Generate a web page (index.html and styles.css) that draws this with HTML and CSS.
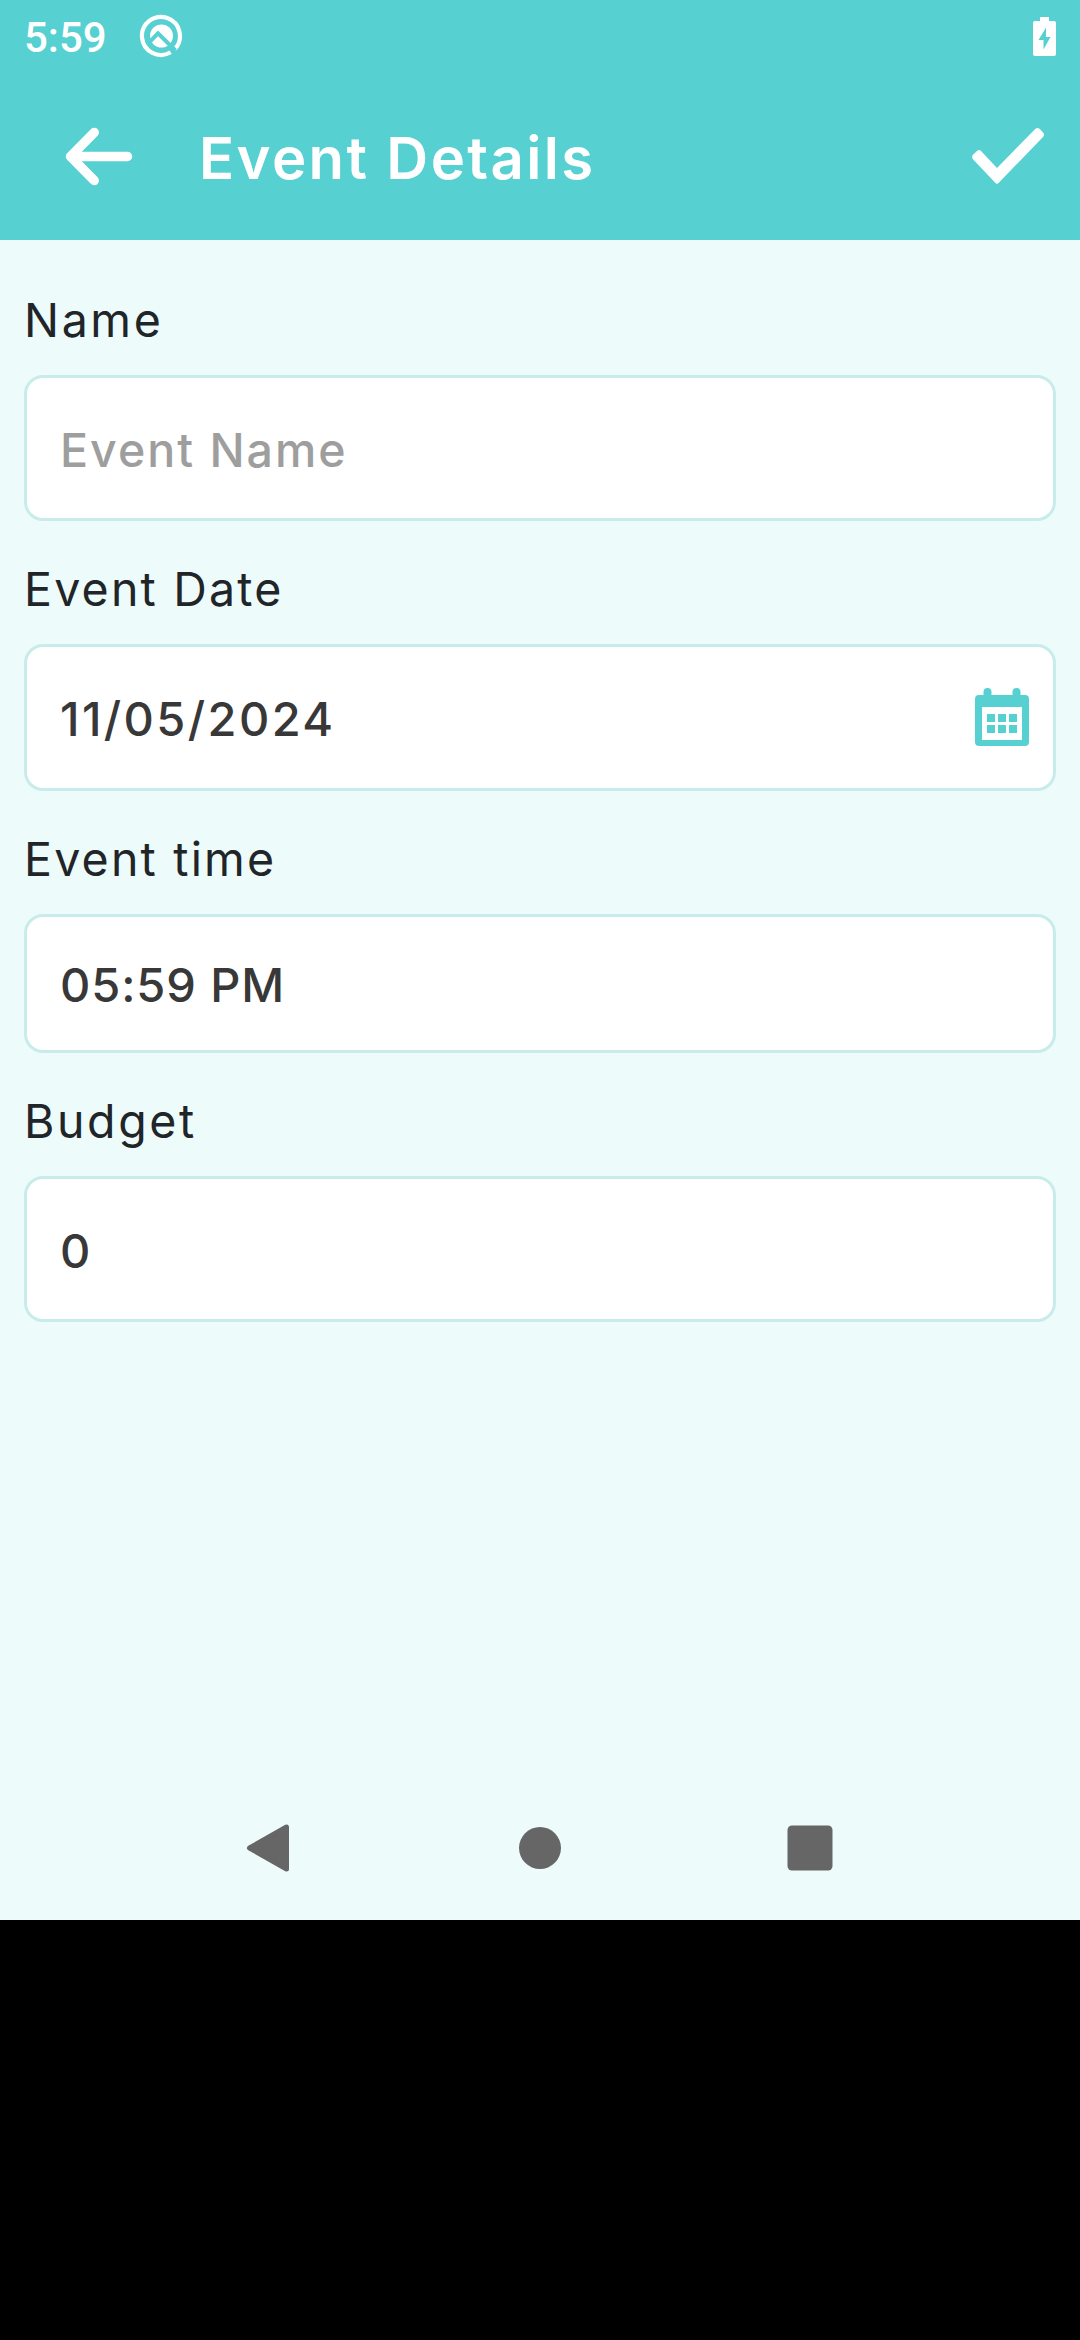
FILE: index.html
```html
<!DOCTYPE html>
<html lang="en">
<head>
<meta charset="utf-8">
<title>Event Details</title>
<link rel="stylesheet" href="styles.css">
</head>
<body>
<div class="screen">
  <div class="status-bar">
    <span class="clock">5:59</span>
    <svg class="app-icon" width="44" height="44" viewBox="0 0 44 44">
      <path d="M34.5 36.200A19 19 0 1 0 30.500 38.900" transform="rotate(-4 22 22)" fill="none" stroke="#fff" stroke-width="4.200"/>
      <circle cx="22.500" cy="22" r="11.500" fill="#fff"/>
      <path d="M11.500 27L19 19.300L36.500 36.500" fill="none" stroke="#56d0d1" stroke-width="4"/>
    </svg>
    <svg class="battery" width="23" height="39" viewBox="0 0 23 39">
      <path fill="#fff" fill-rule="evenodd" d="M7 0h9v4h5a2 2 0 0 1 2 2v31a2 2 0 0 1-2 2H2a2 2 0 0 1-2-2V6a2 2 0 0 1 2-2h5zM13 10.500L5.500 23H10.500V32.500L17.500 20H13z"/>
    </svg>
  </div>
  <header class="app-bar">
    <svg class="back" width="68" height="60" viewBox="0 0 68 60">
      <path d="M62.500 30.500H5.500M29.200 6.500L5.500 30.500L29.200 54.500" fill="none" stroke="#fff" stroke-width="9.500" stroke-linecap="round" stroke-linejoin="round"/>
    </svg>
    <h1 class="title">Event Details</h1>
    <svg class="done" width="72" height="56" viewBox="0 0 72 56">
      <path d="M1.200 26.500L5 23Q7 21.200 9 23L25 40L63 1.200Q65.500-1 68 1.200L71 4.500Q73 6.500 71 9L27 54.500Q25 57 23 54.500L1.200 31.500Q-1 29 1.200 26.500Z" fill="#fff"/>
    </svg>
  </header>
  <main class="form">
    <section class="field">
      <div class="label">Name</div>
      <div class="box"><span class="value placeholder">Event Name</span></div>
    </section>
    <section class="field">
      <div class="label wide">Event Date</div>
      <div class="box tall">
        <span class="value date">11/05/2024</span>
        <svg class="calendar" width="54" height="58" viewBox="0 0 54 58">
          <path fill="#56d0d1" fill-rule="evenodd" d="M4 7H8.500V4a4 4 0 0 1 8 0V7H37.500V4a4 4 0 0 1 8 0V7H50a4 4 0 0 1 4 4V54a4 4 0 0 1-4 4H4a4 4 0 0 1-4-4V11a4 4 0 0 1 4-4zM7 19V52H47V19z"/>
          <path fill="#56d0d1" d="M12 26h8v8h-8zM23 26h8v8h-8zM34 26h8v8h-8zM12 37h8v8h-8zM23 37h8v8h-8zM34 37h8v8h-8z"/>
        </svg>
      </div>
    </section>
    <section class="field">
      <div class="label wide">Event time</div>
      <div class="box short"><span class="value time">05:59 PM</span></div>
    </section>
    <section class="field">
      <div class="label">Budget</div>
      <div class="box"><span class="value">0</span></div>
    </section>
  </main>
  <nav class="nav-bar">
    <svg width="48" height="50" viewBox="0 0 48 50"><path d="M4.500 25L41.500 4V46Z" transform="translate(1 0)" fill="#666" stroke="#666" stroke-width="5" stroke-linejoin="round"/></svg>
    <svg width="42" height="42" viewBox="0 0 42 42"><circle cx="21" cy="21" r="21" fill="#666"/></svg>
    <svg width="46" height="46" viewBox="0 0 46 46"><rect x="0.500" y="0.500" width="45" height="45" rx="4.500" fill="#666"/></svg>
  </nav>
</div>
</body>
</html>
```
FILE: styles.css
```css
* { box-sizing: border-box; }
body {
  margin: 0;
  background: #000;
  font-family: Inter, "Liberation Sans", sans-serif;
}
svg { display: block; flex: none; }
.screen {
  display: flex;
  flex-direction: column;
  height: 1920px;
  background: #eefbfb;
}
.status-bar {
  display: flex;
  align-items: center;
  height: 72px;
  padding: 0 24px;
  background: #56d0d1;
}
.clock {
  color: #fff;
  font: 500 42px/72px Roboto, sans-serif;
  width: 115px;
  padding-top: 3px;
}
.battery { margin-left: auto; }
.app-bar {
  display: flex;
  align-items: center;
  height: 168px;
  padding: 0 36px 0 65px;
  background: #56d0d1;
}
.title {
  flex: 1;
  margin: 4px 0 0 66px;
  color: #fff;
  font-size: 58px;
  font-weight: 600;
  letter-spacing: 2.4px;
  line-height: 72px;
  white-space: nowrap;
}
.form {
  flex: 1;
  padding: 12px 24px 0;
}
.field { padding-top: 40px; }
.label {
  height: 56px;
  margin-bottom: 27px;
  color: #1f2528;
  font-size: 46.5px;
  font-weight: 400;
  line-height: 56px;
  letter-spacing: 2.6px;
}
.label.wide { letter-spacing: 2.2px; }
.box {
  display: flex;
  align-items: center;
  justify-content: space-between;
  height: 146px;
  padding: 0 24px 0 33px;
  border: 3px solid #c8ecec;
  border-radius: 19px;
  background: #fff;
}
.box.tall { height: 147px; }
.box.short { height: 139px; }
.value {
  padding-top: 3px;
  color: #383838;
  font-size: 47px;
  font-weight: 500;
  line-height: 56px;
  letter-spacing: 0.9px;
}
.value.date { letter-spacing: 2.4px; }
.placeholder { color: #9e9e9e; font-size: 46.5px; letter-spacing: 2px; }
.calendar { margin-bottom: 1px; }
.nav-bar {
  display: flex;
  align-items: center;
  justify-content: space-between;
  height: 144px;
  padding: 0 247px 0 244px;
}
```
